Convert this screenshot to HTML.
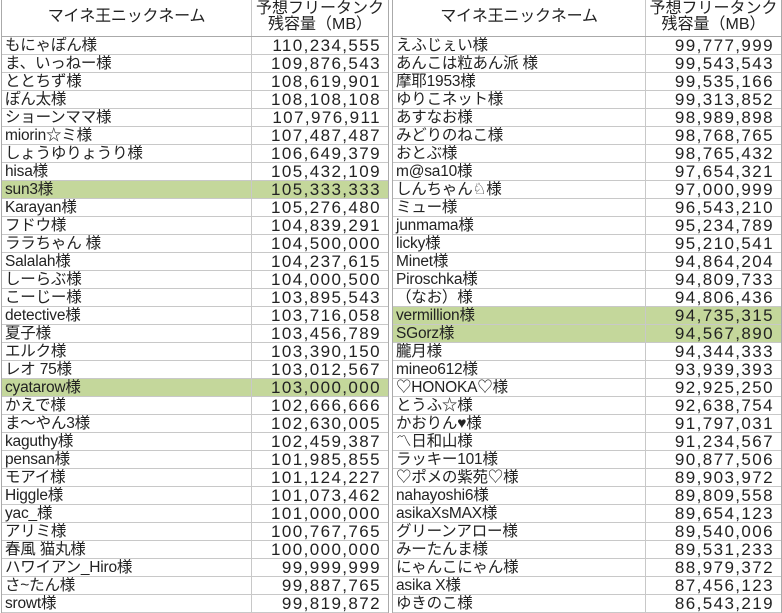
<!DOCTYPE html>
<html><head><meta charset="utf-8">
<style>
html,body{margin:0;padding:0;background:#fff;width:782px;height:613px;overflow:hidden}
body{font-family:"Liberation Sans","Noto Sans CJK JP",sans-serif;font-size:15.5px;color:#222;position:relative}
.t{position:absolute;top:0;border-left:1px solid #aaa;border-right:1px solid #aaa}
.r{display:flex;box-sizing:border-box;height:18px;border-bottom:1px solid #c8c8c8;line-height:17px}
.h{height:37px;border-bottom:1px solid #aaa;line-height:16px}
.n{box-sizing:border-box;border-right:1px solid #c8c8c8;padding-left:3px;white-space:nowrap;overflow:hidden;letter-spacing:-0.2px}
.v{flex:1;text-align:right;padding-right:7px;letter-spacing:1.4px;font-size:17px;white-space:nowrap;line-height:18px}
.h .n{text-align:center;padding:9px 0 0 0;font-size:16px}
.h .v{text-align:center;padding:1px 0 0 0;font-size:16px;letter-spacing:0;line-height:16px}
.g{background:#c4d79b}
</style></head><body>
<div class="t" style="left:1px;width:386px" id="L">
<div class="r h"><div class="n" style="width:250px">マイネ王ニックネーム</div><div class="v">予想フリータンク<br>残容量（MB）</div></div>
</div>
<div class="t" style="left:392px;width:388px" id="R">
<div class="r h"><div class="n" style="width:253px">マイネ王ニックネーム</div><div class="v">予想フリータンク<br>残容量（MB）</div></div>
</div>
<script>
var L=[["もにゃぽん様","110,234,555"],["ま、いっねー様","109,876,543"],["ととちず様","108,619,901"],["ぽん太様","108,108,108"],["ショーンママ様","107,976,911"],["miorin☆ミ様","107,487,487"],["しょうゆりょうり様","106,649,379"],["hisa様","105,432,109"],["sun3様","105,333,333",1],["Karayan様","105,276,480"],["フドウ様","104,839,291"],["ララちゃん 様","104,500,000"],["Salalah様","104,237,615"],["しーらぶ様","104,000,500"],["こーじー様","103,895,543"],["detective様","103,716,058"],["夏子様","103,456,789"],["エルク様","103,390,150"],["レオ 75様","103,012,567"],["cyatarow様","103,000,000",1],["かえで様","102,666,666"],["ま〜やん3様","102,630,005"],["kaguthy様","102,459,387"],["pensan様","101,985,855"],["モアイ様","101,124,227"],["Higgle様","101,073,462"],["yac_様","101,000,000"],["アリミ様","100,767,765"],["春風 猫丸様","100,000,000"],["ハワイアン_Hiro様","99,999,999"],["さ~たん様","99,887,765"],["srowt様","99,819,872"]];
var R=[["えふじぇい様","99,777,999"],["あんこは粒あん派 様","99,543,543"],["摩耶1953様","99,535,166"],["ゆりこネット様","99,313,852"],["あすなお様","98,989,898"],["みどりのねこ様","98,768,765"],["おとぶ様","98,765,432"],["m@sa10様","97,654,321"],["しんちゃん♘様","97,000,999"],["ミュー様","96,543,210"],["junmama様","95,234,789"],["licky様","95,210,541"],["Minet様","94,864,204"],["Piroschka様","94,809,733"],["（なお）様","94,806,436"],["vermillion様","94,735,315",1],["SGorz様","94,567,890",1],["朧月様","94,344,333"],["mineo612様","93,939,393"],["♡HONOKA♡様","92,925,250"],["とうふ☆様","92,638,754"],["かおりん♥様","91,797,031"],["〽日和山様","91,234,567"],["ラッキー101様","90,877,506"],["♡ポメの紫苑♡様","89,903,972"],["nahayoshi6様","89,809,558"],["asikaXsMAX様","89,654,123"],["グリーンアロー様","89,540,006"],["みーたんま様","89,531,233"],["にゃんこにゃん様","88,979,372"],["asika X様","87,456,123"],["ゆきのこ様","86,543,219"]];
function fill(id,d,w){var e=document.getElementById(id),h="";d.forEach(function(x){h+='<div class="r'+(x[2]?' g':'')+'"><div class="n" style="width:'+w+'px">'+x[0]+'</div><div class="v">'+x[1]+'</div></div>';});e.innerHTML+=h;}
fill("L",L,250);fill("R",R,253);
</script>
</body></html>
